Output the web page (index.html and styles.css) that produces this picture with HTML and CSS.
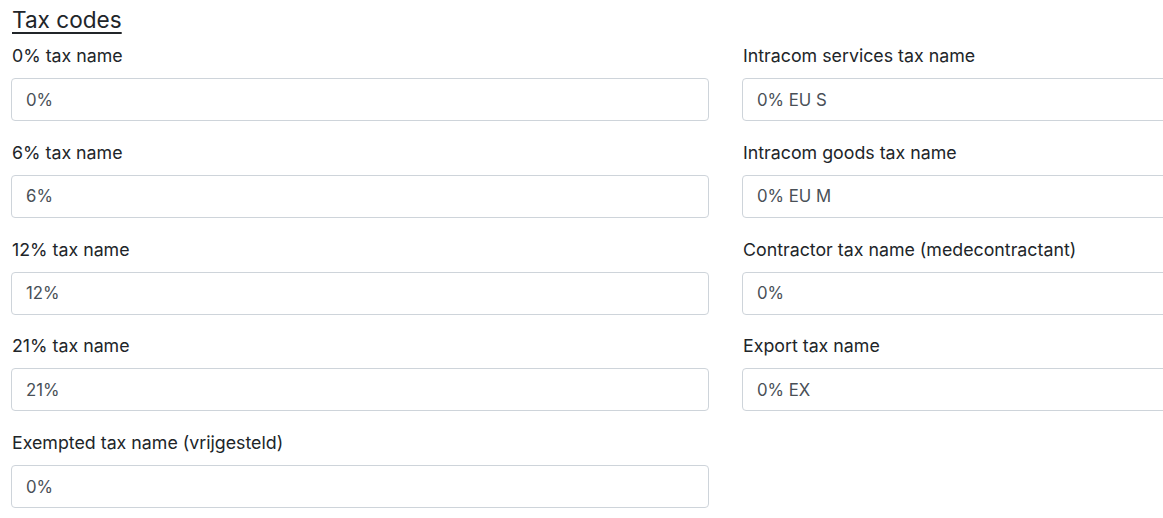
FILE: index.html
```html
<!DOCTYPE html>
<html lang="en">
<head>
<meta charset="utf-8">
<title>Tax codes</title>
<link rel="stylesheet" href="styles.css">
</head>
<body>
<div class="page">
  <h2 class="title">Tax codes</h2>
  <div class="fields">
    <div class="field"><label class="label">0% tax name</label><input class="input" type="text" value="0%"></div>
    <div class="field"><label class="label">Intracom services tax name</label><input class="input" type="text" value="0% EU S"></div>
    <div class="field"><label class="label">6% tax name</label><input class="input" type="text" value="6%"></div>
    <div class="field"><label class="label">Intracom goods tax name</label><input class="input" type="text" value="0% EU M"></div>
    <div class="field"><label class="label">12% tax name</label><input class="input" type="text" value="12%"></div>
    <div class="field"><label class="label">Contractor tax name (medecontractant)</label><input class="input" type="text" value="0%"></div>
    <div class="field"><label class="label">21% tax name</label><input class="input" type="text" value="21%"></div>
    <div class="field"><label class="label">Export tax name</label><input class="input" type="text" value="0% EX"></div>
    <div class="field"><label class="label">Exempted tax name (vrijgesteld)</label><input class="input" type="text" value="0%"></div>
  </div>
</div>
</body>
</html>
```

FILE: styles.css
```css
html, body {
  margin: 0;
  padding: 0;
  background: #ffffff;
  overflow: hidden;
}
body {
  font-family: Inter, "Noto Sans", sans-serif;
  color: #212529;
}
.page {
  padding: 4px 0 0 11px;
  width: 1500px;
}
.title {
  margin: 0 0 0 1px;
  font-size: 22.6px;
  font-weight: 400;
  line-height: 32px;
  text-decoration: underline;
  text-underline-offset: 4px;
  text-decoration-thickness: 2px;
}
.fields {
  display: grid;
  grid-template-columns: 698px 698px;
  column-gap: 33px;
  row-gap: 19.75px;
  margin-top: 8px;
}
.field {
  display: flex;
  flex-direction: column;
}
.label {
  font-size: 17.8px;
  line-height: 24px;
  margin: 0 0 10px 1px;
  color: #212529;
}
.input {
  box-sizing: border-box;
  height: 43px;
  padding: 0 14px;
  border: 1px solid #ced4da;
  border-radius: 4px;
  font-family: Inter, "Noto Sans", sans-serif;
  font-size: 16.8px;
  color: #495057;
  background: #fff;
  outline: none;
  width: 100%;
}
```
